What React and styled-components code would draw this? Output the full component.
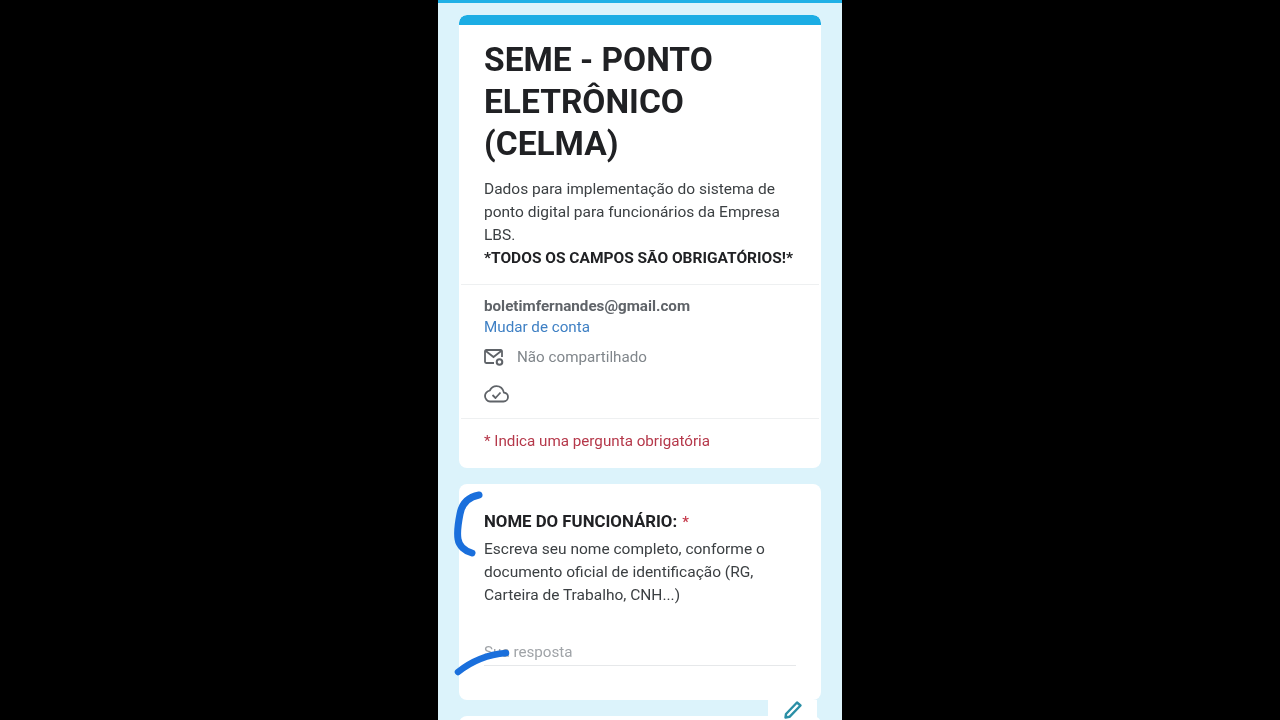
import styled, { createGlobalStyle } from 'styled-components';

const Global = createGlobalStyle`
  html, body { margin: 0; height: 100%; background: #000; }
  #root { height: 100%; }
`

const Page = styled.div`
  display: flex;
  justify-content: center;
  height: 720px;
  background: #000;
  font-family: Roboto, "Liberation Sans", sans-serif;
  overflow: hidden;
`
const Phone = styled.div`
  position: relative;
  width: 404px;
  height: 720px;
  box-sizing: border-box;
  padding: 12px 21px 0;
  background: #dcf3fb;
  border-top: 3px solid #1fb0e6;
  overflow: hidden;
  filter: blur(0.6px);
`
const Card = styled.div`
  background: #fff;
  border-radius: 8px;
  margin-bottom: ${props => props.$gap || 0}px;
  height: ${props => props.$height ? props.$height + 'px' : 'auto'};
  box-sizing: border-box;
  overflow: hidden;
`
const TopBar = styled.div`
  height: 10px;
  background: #1cade4;
  border-radius: 8px 8px 0 0;
`
const Section = styled.div`
  padding: ${props => props.$padding};
  border-bottom: ${props => props.$line ? '1px solid #eef0f1' : 'none'};
  margin: 0 2px;
`
const QuestionBody = styled.div`
  padding: 26px 25px 0 25px;
`
const Title = styled.h1`
  margin: 0 0 13px;
  font-size: 33.5px;
  line-height: 42px;
  font-weight: 700;
  color: #202124;
`
const Text = styled.div`
  font-size: 15.5px;
  line-height: 23.1px;
  color: #3c4043;
`
const Strong = styled.div`
  font-size: 15.5px;
  line-height: 23px;
  font-weight: 700;
  color: #202124;
`
const Email = styled.div`
  font-size: 15.2px;
  line-height: 21px;
  font-weight: 700;
  color: #5f6368;
`
const Link = styled.div`
  font-size: 15.2px;
  line-height: 21px;
  color: #3f80c4;
`
const IconRow = styled.div`
  display: flex;
  align-items: center;
  gap: 13px;
  height: 22px;
  margin-top: ${props => props.$top}px;
  font-size: 15.2px;
  color: #80868b;
`
const Required = styled.div`
  font-size: 15.2px;
  line-height: 20px;
  color: #b5384a;
`
const Question = styled.div`
  font-size: 16.8px;
  line-height: 22px;
  font-weight: 700;
  color: #202124;
  margin-bottom: 5px;
  span { color: #c5394a; font-weight: 500; margin-left: 1px; font-size: 15px; }
`
const Answer = styled.div`
  margin: 34px 0 0;
  padding-bottom: 3px;
  font-size: 15.2px;
  line-height: 20px;
  color: #a0a4a8;
  border-bottom: 1px solid #e6e8ea;
`
const Fab = styled.div`
  position: absolute;
  right: 25px;
  bottom: 0;
  width: 49px;
  height: 20px;
  background: #fff;
  display: flex;
  justify-content: center;
  align-items: flex-start;
`
const Marks = styled.svg`
  position: absolute;
  left: 0;
  top: -3px;
  width: 404px;
  height: 720px;
  pointer-events: none;
`

const MailIcon = () => (
  <svg width="20" height="17" viewBox="0 0 20 17" fill="none" stroke="#5f6368" strokeWidth="1.8">
    <path d="M10 14H2.200A1.200 1.200 0 0 1 1 12.800V2.200A1.200 1.200 0 0 1 2.200 1H16.800A1.200 1.200 0 0 1 18 2.200V8" />
    <path d="M1.500 1.800L9.500 8L17.500 1.800" />
    <circle cx="15.500" cy="13" r="2.800" strokeWidth="2" />
  </svg>
)

const CloudIcon = () => (
  <svg width="25" height="18" viewBox="0 0 25 18" fill="none" stroke="#5f6368" strokeWidth="1.800" strokeLinejoin="round">
    <path d="M6 16.500H19.500C22 16.500 24 14.500 24 12C24 9.800 22.200 8 20 7.700C19 4 16 1.200 12.500 1.200C9.500 1.200 7 3 5.800 5.500C3 6.500 1 9 1 11C1 14 3.500 16.500 6 16.500Z" />
    <path d="M8.500 10L11.500 13L16.500 7.500" />
  </svg>
)

const PencilIcon = () => (
  <svg width="22" height="20" viewBox="0 0 22 20" fill="none">
    <path d="M3.500 17.500L4 14L15 2.500L18.500 5.500L7.500 16.800Z" fill="#fff" stroke="#2b8fa6" strokeWidth="2.400" strokeLinejoin="round" />
  </svg>
)

const App = () => {
  return (
    <Page>
      <Global />
      <Phone>
        <Card $gap={16}>
          <TopBar />
          <Section $padding="14px 23px 14px" $line>
            <Title>SEME - PONTO ELETRÔNICO (CELMA)</Title>
            <Text>
              Dados para implementação do sistema de ponto digital para funcionários da Empresa LBS.
            </Text>
            <Strong>*TODOS OS CAMPOS SÃO OBRIGATÓRIOS!*</Strong>
          </Section>
          <Section $padding="11px 23px 13px" $line>
            <Email>boletimfernandes@gmail.com</Email>
            <Link>Mudar de conta</Link>
            <IconRow $top={8}><MailIcon />Não compartilhado</IconRow>
            <IconRow $top={15}><CloudIcon /></IconRow>
          </Section>
          <Section $padding="12px 23px 17px">
            <Required>* Indica uma pergunta obrigatória</Required>
          </Section>
        </Card>
        <Card $height={216} $gap={16}>
          <QuestionBody>
            <Question>NOME DO FUNCIONÁRIO: <span>*</span></Question>
            <Text>Escreva seu nome completo, conforme o documento oficial de identificação (RG, Carteira de Trabalho, CNH...)</Text>
            <Answer>Sua resposta</Answer>
          </QuestionBody>
        </Card>
        <Card $height={40} />
        <Fab><PencilIcon /></Fab>
        <Marks viewBox="0 0 404 720" fill="none">
          <path d="M41 495C30 497 24 503 22 514C20 524 19 533 20 539C21 546 27 551 34 553" stroke="#1a6fdc" strokeWidth="7" strokeLinecap="round" />
          <path d="M20 672C30 664 44 655 68 653" stroke="#1a6fdc" strokeWidth="6.500" strokeLinecap="round" />
        </Marks>
      </Phone>
    </Page>
  )
}

export default App
